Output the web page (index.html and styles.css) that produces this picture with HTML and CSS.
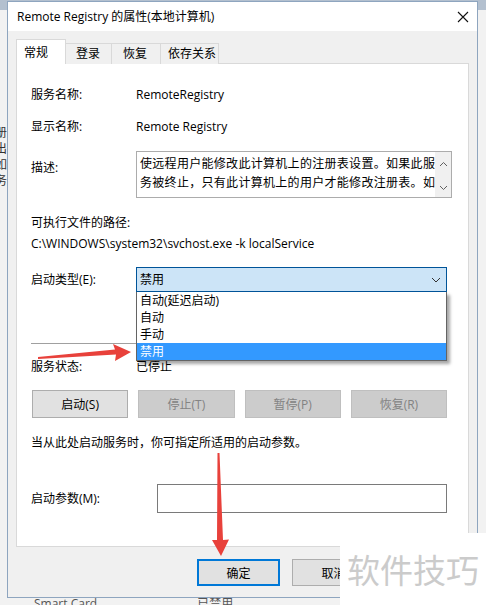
FILE: index.html
```html
<!DOCTYPE html>
<html lang="zh-CN">
<head>
    <meta charset="UTF-8">
    <meta name="viewport" content="width=device-width, initial-scale=1.0">
    <title>Remote Registry 的属性(本地计算机)</title>
    <link rel="stylesheet" href="styles.css">
</head>
<body>
    <div class="desk">
        <div class="behind-left">册<br>出<br>如<br>务</div>
        <div class="behind-bottom"><span>Smart Card</span><span class="b2">已禁用</span></div>

        <div class="dialog">
            <div class="titlebar">
                <span class="title">Remote Registry 的属性(本地计算机)</span>
                <svg class="close" width="12" height="12" viewBox="0 0 12 12">
                    <path d="M1 1 L11 11 M11 1 L1 11" stroke="#111" stroke-width="1.1" fill="none"/>
                </svg>
            </div>
            <div class="dlg-body">
                <div class="tabs">
                    <div class="tab active">常规</div>
                    <div class="tab">登录</div>
                    <div class="tab">恢复</div>
                    <div class="tab">依存关系</div>
                </div>
                <div class="panel">
                    <div class="row r1"><span class="label">服务名称:</span><span>RemoteRegistry</span></div>
                    <div class="row r2"><span class="label">显示名称:</span><span>Remote Registry</span></div>
                    <div class="row r3">
                        <span class="label desc-label">描述:</span>
                        <div class="desc">
                            <div class="desc-text">使远程用户能修改此计算机上的注册表设置。如果此服<br>务被终止，只有此计算机上的用户才能修改注册表。如</div>
                            <div class="scroll">
                                <svg width="9" height="6" viewBox="0 0 9 6"><path d="M1 5 L4.5 1.5 L8 5" stroke="#606060" fill="none"/></svg>
                                <svg width="9" height="6" viewBox="0 0 9 6"><path d="M1 1 L4.5 4.5 L8 1" stroke="#606060" fill="none"/></svg>
                            </div>
                        </div>
                    </div>
                    <div class="row r4">可执行文件的路径:</div>
                    <div class="row r5">C:\WINDOWS\system32\svchost.exe -k localService</div>
                    <div class="row r6">
                        <span class="label">启动类型(E):</span>
                        <div class="select-wrap">
                            <div class="select">
                                <span>禁用</span>
                                <svg width="10" height="6" viewBox="0 0 10 6"><path d="M1 1 L5 5 L9 1" stroke="#333" fill="none"/></svg>
                            </div>
                            <ul class="listbox">
                                <li>自动(延迟启动)</li>
                                <li>自动</li>
                                <li>手动</li>
                                <li class="selected">禁用</li>
                            </ul>
                        </div>
                    </div>
                    <div class="sep"></div>
                    <div class="row r7"><span class="label">服务状态:</span><span>已停止</span></div>
                    <div class="btn-row">
                        <button class="btn">启动(S)</button>
                        <button class="btn" disabled>停止(T)</button>
                        <button class="btn" disabled>暂停(P)</button>
                        <button class="btn" disabled>恢复(R)</button>
                    </div>
                    <div class="row r8">当从此处启动服务时，你可指定所适用的启动参数。</div>
                    <div class="row r9">
                        <span class="label wide">启动参数(M):</span>
                        <div class="param"></div>
                    </div>
                </div>
                <div class="actions">
                    <button class="btn default">确定</button>
                    <button class="btn">取消</button>
                    <button class="btn">应用(A)</button>
                </div>
            </div>
        </div>

        <svg class="arrows" width="486" height="605" viewBox="0 0 486 605">
            <polygon points="38,357 115,349.5 113,344 131,352 115,361 116,354.5 38,359" fill="#e8413b"/>
            <polygon points="217.5,453 219.5,453 223,540 229,539.5 221,556 212,540 217,540" fill="#e8413b"/>
        </svg>
        <div class="watermark">软件技巧</div>
    </div>
</body>
</html>
```

FILE: styles.css
```css
body{
    margin:0;
    padding:0;
    background:#eceef0;
    font-family:"Open Sans","Noto Sans CJK SC",sans-serif;
    font-size:12px;
    color:#000;
}
.desk{
    position:relative;
    width:486px;
    height:605px;
    overflow:hidden;
    background:linear-gradient(to bottom,#b3c0cf 0,#b3c0cf 10px,#f2f2f2 10px);
}
.behind-left{
    position:absolute;
    left:-5px;
    top:124px;
    line-height:16px;
    color:#333;
    font-family:"Noto Sans CJK SC",sans-serif;
}
.behind-bottom{
    position:absolute;
    left:34px;
    top:597px;
    color:#555;
    font-size:12px;
    line-height:14px;
}
.behind-bottom .b2{
    margin-left:100px;
}

.dialog{
    position:relative;
    margin:1px 0 0 7px;
    width:471px;
    height:597px;
    box-sizing:border-box;
    border:1px solid #8ea5bf;
    background:#f0f0f0;
}
.titlebar{
    height:29px;
    background:#fff;
    display:flex;
    align-items:center;
    justify-content:space-between;
    padding:0 8px 0 9px;
}
.title{
    font-size:12px;
    line-height:16px;
}
.dlg-body{
    padding:9px 0 0 8px;
}
.tabs{
    display:flex;
    align-items:flex-end;
    height:24px;
    margin-bottom:-1px;
    position:relative;
}
.tab{
    height:21px;
    line-height:20px;
    box-sizing:border-box;
    border:1px solid #d9d9d9;
    border-left:none;
    border-bottom:none;
    background:#f0f0f0;
}
.tab.active{
    width:50px;
    height:25px;
    line-height:25px;
    background:#fff;
    border-left:1px solid #d9d9d9;
    padding-left:7px;
}
.tab:nth-child(2){ width:46px; padding-left:10px; }
.tab:nth-child(3){ width:49px; padding-left:11px; }
.tab:nth-child(4){ width:58px; padding-left:7px; }

.panel{
    width:453px;
    height:484px;
    box-sizing:border-box;
    border:1px solid #d9d9d9;
    background:#fff;
    padding:0 21px 0 14px;
}
.row{
    display:flex;
    align-items:center;
    line-height:20px;
}
.label{
    width:105px;
    flex-shrink:0;
}
.r1{ margin-top:21px; }
.r2{ margin-top:12px; }
.r3{ margin-top:14px; align-items:flex-start; }
.desc-label{ margin-top:7px; }
.desc{
    flex:1;
    height:47px;
    box-sizing:border-box;
    border:1px solid #acacac;
    display:flex;
}
.desc-text{
    flex:1;
    padding:1px 0 0 3px;
    line-height:19px;
    white-space:nowrap;
    overflow:hidden;
    font-family:"Noto Sans CJK SC",sans-serif;
    font-size:12px;
    letter-spacing:0.3px;
}
.scroll{
    width:16px;
    background:#f0f0f0;
    display:flex;
    flex-direction:column;
    align-items:center;
    justify-content:space-between;
    padding:9px 0 6px;
}
.r4{ margin-top:15px; }
.r5{ margin-top:1px; }
.r6{ margin-top:13px; }
.select-wrap{
    flex:1;
    position:relative;
}
.select{
    height:25px;
    box-sizing:border-box;
    border:1px solid #005499;
    background:#cce4f7;
    display:flex;
    align-items:center;
    justify-content:space-between;
    padding:0 5px 0 3px;
}
.listbox{
    position:absolute;
    top:25px;
    left:0;
    right:0;
    margin:0;
    padding:0;
    list-style:none;
    background:#fff;
    border:1px solid #646464;
    border-top:none;
    box-shadow:3px 3px 3px rgba(0,0,0,0.35);
    z-index:2;
}
.listbox li{
    height:17px;
    line-height:17px;
    padding-left:3px;
}
.listbox li.selected{
    background:#3399ff;
    color:#fff;
}
.sep{
    margin-top:51px;
    height:1px;
    background:#a0a0a0;
}
.r7{ margin-top:13px; }
.btn-row{
    margin-top:13px;
    display:flex;
    gap:10px;
    padding-left:1px;
}
.btn{
    font-family:"Open Sans","Noto Sans CJK SC",sans-serif;
    font-size:12px;
    color:#000;
    height:28px;
    background:#e1e1e1;
    border:1px solid #adadad;
    padding:0;
}
.btn-row .btn{
    flex:1;
}
.btn:disabled{
    background:#cccccc;
    border-color:#bfbfbf;
    color:#838383;
}
.r8{ margin-top:15px; }
.r9{ margin-top:31px; }
.label.wide{ width:126px; }
.param{
    flex:1;
    height:29px;
    box-sizing:border-box;
    border:1px solid #7a7a7a;
}
.actions{
    margin-top:12px;
    display:flex;
    justify-content:flex-end;
    gap:12px;
    padding-right:7px;
}
.actions .btn{
    width:83px;
    height:27px;
}
.btn.default{
    border:2px solid #0078d7;
}

.arrows{
    position:absolute;
    left:0;
    top:0;
    pointer-events:none;
}
.watermark{
    position:absolute;
    left:340px;
    top:533px;
    width:146px;
    height:72px;
    background:#fff;
    color:#cbcbcb;
    font-family:"Noto Sans CJK SC",sans-serif;
    font-size:33px;
    line-height:72px;
    text-align:center;
}
```
